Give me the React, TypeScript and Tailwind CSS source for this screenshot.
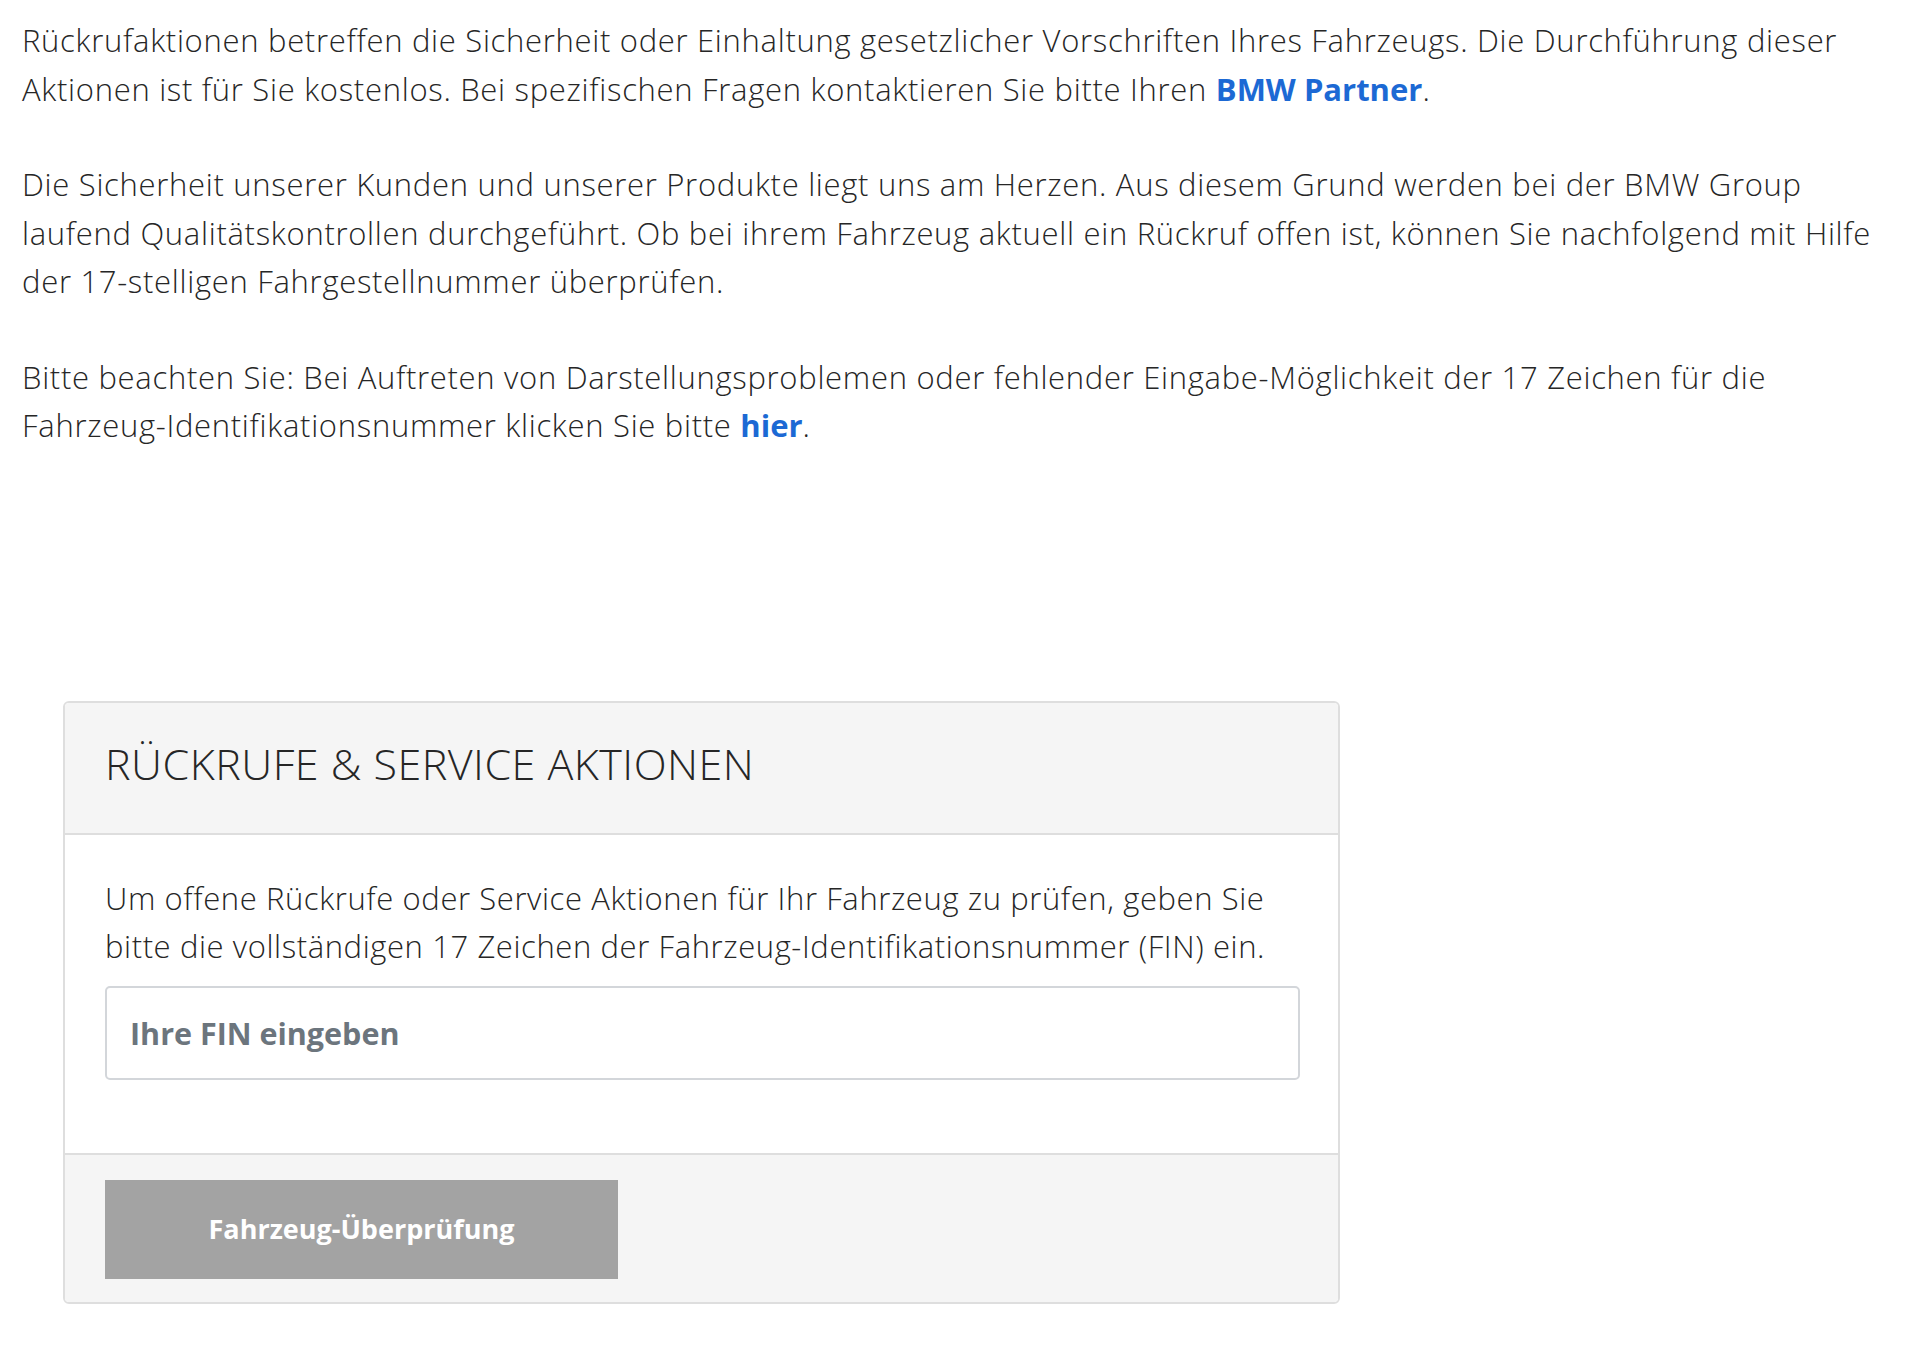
import { useState } from 'react';

export default function App() {
  const [fin, setFin] = useState('');

  return (
    <div className="min-h-screen w-full bg-white text-[#262626] font-['Open_Sans','Liberation_Sans',sans-serif]">
      <div className="pl-[22px] pr-4 pt-[16px] text-[31px] font-light leading-[48.5px] tracking-[0.7px]">
        {/* Einleitung */}
        <p>
          Rückrufaktionen betreffen die Sicherheit oder Einhaltung gesetzlicher Vorschriften Ihres Fahrzeugs. Die Durchführung dieser
          <br />
          Aktionen ist für Sie kostenlos. Bei spezifischen Fragen kontaktieren Sie bitte Ihren{' '}
          <a href="#" className="font-bold tracking-normal text-[#1c69d4]">BMW Partner</a>.
        </p>
        <p className="mt-[47px]">
          Die Sicherheit unserer Kunden und unserer Produkte liegt uns am Herzen. Aus diesem Grund werden bei der BMW Group
          <br />
          laufend Qualitätskontrollen durchgeführt. Ob bei ihrem Fahrzeug aktuell ein Rückruf offen ist, können Sie nachfolgend mit Hilfe
          <br />
          der 17-stelligen Fahrgestellnummer überprüfen.
        </p>
        <p className="mt-[47px]">
          Bitte beachten Sie: Bei Auftreten von Darstellungsproblemen oder fehlender Eingabe-Möglichkeit der 17 Zeichen für die
          <br />
          Fahrzeug-Identifikationsnummer klicken Sie bitte{' '}
          <a href="#" className="font-bold tracking-normal text-[#1c69d4]">hier</a>.
        </p>
      </div>

      {/* FIN-Prüfung */}
      <div className="ml-[63px] mt-[251px] w-[1277px] overflow-hidden rounded-[6px] border-2 border-[#dedede]">
        <div className="border-b-2 border-[#dedede] bg-[#f5f5f5] px-[40px] pt-[37px] pb-[45px]">
          <h2 className="text-[43px] font-light leading-[48px] tracking-[0.5px]">RÜCKRUFE &amp; SERVICE AKTIONEN</h2>
        </div>
        <div className="bg-white px-[40px] pt-[39px] pb-[73px]">
          <p className="text-[31px] font-light leading-[48.5px] tracking-[0.6px]">
            Um offene Rückrufe oder Service Aktionen für Ihr Fahrzeug zu prüfen, geben Sie
            <br />
            bitte die vollständigen 17 Zeichen der Fahrzeug-Identifikationsnummer (FIN) ein.
          </p>
          <input
            type="text"
            value={fin}
            onChange={(e) => setFin(e.target.value)}
            placeholder="Ihre FIN eingeben"
            maxLength={17}
            className="mt-[15px] block h-[94px] w-[1195px] rounded-[5px] border-2 border-[#d3d6da] px-[23px] text-[30.5px] font-bold text-[#262626] placeholder:text-[#6c757d] focus:outline-none"
          />
        </div>
        <div className="border-t-2 border-[#dedede] bg-[#f5f5f5] px-[40px] pt-[25px] pb-[23px]">
          <button
            type="button"
            disabled={fin.length !== 17}
            className="flex h-[99px] w-[513px] items-center justify-center bg-[#a3a3a3] text-[27px] font-bold text-white"
          >
            Fahrzeug-Überprüfung
          </button>
        </div>
      </div>
    </div>
  );
}
